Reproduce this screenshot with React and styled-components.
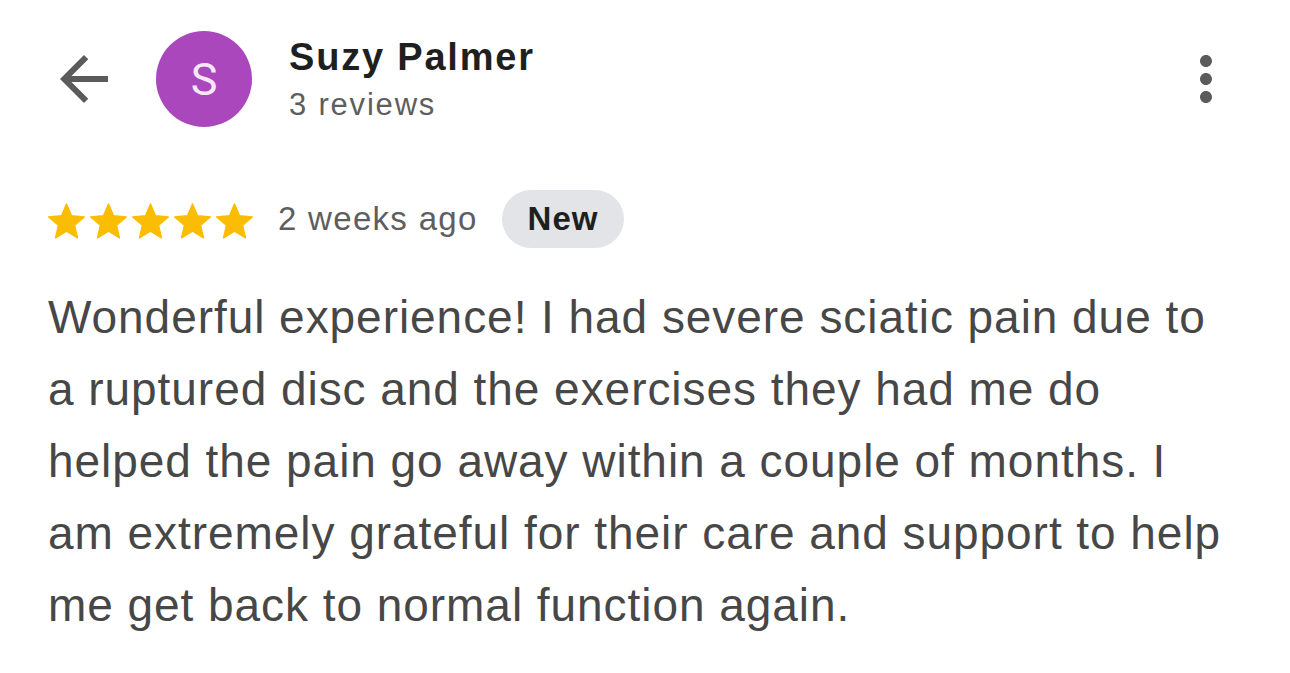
import React from "react";
import styled, { createGlobalStyle } from "styled-components";

const Global = createGlobalStyle`
  html, body { margin: 0; padding: 0; background: #ffffff; }
  body { font-family: "Liberation Sans", Arial, Helvetica, sans-serif; -webkit-font-smoothing: antialiased; }
`;

const Page = styled.div`
  width: 1290px;
  min-height: 673px;
  box-sizing: border-box;
  padding: 31px 48px 0 48px;
  background: #ffffff;
`;

const Header = styled.header`
  display: flex;
  align-items: center;
  height: 96px;
`;

const IconButton = styled.button`
  display: flex;
  align-items: center;
  justify-content: center;
  width: 72px;
  height: 72px;
  padding: 0;
  border: 0;
  background: transparent;
  color: #5b5b5b;
  flex: none;
  svg { width: 72px; height: 72px; display: block; }
`;

const Avatar = styled.div`
  width: 96px;
  height: 96px;
  margin-left: 36px;
  border-radius: 50%;
  background: #ab47bc;
  color: #f7e8f9;
  display: flex;
  align-items: center;
  justify-content: center;
  font-family: Roboto, "Liberation Sans", sans-serif;
  font-size: 45px;
  flex: none;
`;

const Who = styled.div`
  display: flex;
  flex-direction: column;
  margin-left: 37px;
  flex: 1;
  gap: 8px;
`;

const Name = styled.div`
  font-size: 38px;
  line-height: 44px;
  font-weight: 700;
  letter-spacing: 1.8px;
  color: #1f1f1f;
`;

const Count = styled.div`
  font-size: 31px;
  line-height: 36px;
  letter-spacing: 1.8px;
  color: #5e5e5e;
`;

const MetaRow = styled.div`
  display: flex;
  align-items: center;
  margin-top: 63px;
  height: 58px;
`;

const Stars = styled.div`
  display: flex;
  align-items: center;
  gap: 5px;
  margin-top: 4px;
  color: #fbbc04;
  svg { width: 37px; height: 36px; display: block; }
`;

const Ago = styled.span`
  margin-left: 25px;
  font-size: 33px;
  letter-spacing: 1.3px;
  color: #5e5e5e;
`;

const Badge = styled.span`
  margin-left: 24px;
  height: 58px;
  padding: 0 26px 0 26px;
  border-radius: 29px;
  background: #e2e4e7;
  display: flex;
  align-items: center;
  font-size: 33px;
  font-weight: 700;
  letter-spacing: 1px;
  color: #1f1f1f;
`;

const Body = styled.p`
  margin: 33px 0 0 0;
  font-size: 46px;
  line-height: 72px;
  letter-spacing: 0.95px;
  color: #474747;
`;

const Star = () => (
  <svg viewBox="1.6 1.6 20.8 19.9" aria-hidden="true">
    <path
      d="M12 17.27L18.18 21l-1.64-7.03L22 9.24l-7.19-.61L12 2 9.19 8.63 2 9.24l5.46 4.73L5.82 21z"
      fill="currentColor"
      stroke="currentColor"
      strokeWidth="0.8"
      strokeLinejoin="round"
    />
  </svg>
);

export default function App() {
  return (
    <>
      <Global />
      <Page>
        <Header>
          <IconButton aria-label="Back">
            <svg viewBox="0 0 24 24">
              <path
                fill="currentColor"
                d="M20 11H7.83l5.59-5.59L12 4l-8 8 8 8 1.41-1.41L7.830 13H20v-2z"
              />
            </svg>
          </IconButton>
          <Avatar>S</Avatar>
          <Who>
            <Name>Suzy Palmer</Name>
            <Count>3 reviews</Count>
          </Who>
          <IconButton aria-label="More">
            <svg viewBox="0 0 24 24">
              <path
                fill="currentColor"
                d="M12 8c1.1 0 2-.9 2-2s-.9-2-2-2-2 .9-2 2 .9 2 2 2zm0 2c-1.1 0-2 .9-2 2s.9 2 2 2 2-.9 2-2-.9-2-2-2zm0 6c-1.1 0-2 .9-2 2s.9 2 2 2 2-.9 2-2-.9-2-2-2z"
              />
            </svg>
          </IconButton>
        </Header>
        <MetaRow>
          <Stars>
            {[0, 1, 2, 3, 4].map((i) => (
              <Star key={i} />
            ))}
          </Stars>
          <Ago>2 weeks ago</Ago>
          <Badge>New</Badge>
        </MetaRow>
        <Body>
          Wonderful experience! I had severe sciatic pain due to a ruptured disc
          and the exercises they had me do helped the pain go away within a
          couple of months. I am extremely grateful for their care and support
          to help me get back to normal function again.
        </Body>
      </Page>
    </>
  );
}
